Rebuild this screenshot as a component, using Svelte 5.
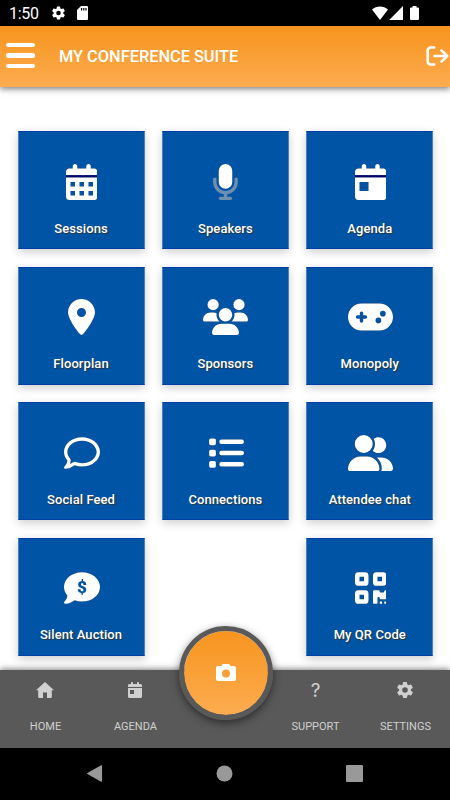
<script lang="ts">
	interface Tile {
		label: string;
		icon: string;
		width: number;
		column: number;
	}

	const calendarTop =
		'M128 0c17.7 0 32 14.3 32 32V64H288V32c0-17.7 14.3-32 32-32s32 14.3 32 32V64h48c26.5 0 48 21.5 48 48v48H0V112C0 85.5 21.5 64 48 64H96V32c0-17.7 14.3-32 32-32z';
	const calendarBody = 'M0 192H448V464c0 26.5-21.5 48-48 48H48c-26.5 0-48-21.5-48-48V192z';
	const gear =
		'M19.4 13c.04-.3.06-.65.06-1s-.02-.7-.07-1l2.1-1.65c.2-.15.24-.42.12-.64l-2-3.46c-.12-.22-.38-.3-.6-.22l-2.5 1c-.5-.4-1.07-.73-1.68-.98l-.38-2.65A.5.5 0 0 0 14 2h-4c-.24 0-.45.17-.48.4l-.38 2.65c-.6.25-1.17.6-1.68.98l-2.5-1c-.22-.08-.48 0-.6.22l-2 3.46c-.12.22-.07.5.12.64L4.6 11a8 8 0 0 0 0 2l-2.1 1.65c-.2.15-.25.42-.13.64l2 3.46c.12.22.38.3.6.22l2.5-1c.5.4 1.07.73 1.68.98l.38 2.65c.03.23.24.4.48.4h4c.24 0 .45-.17.48-.4l.38-2.65c.6-.25 1.17-.6 1.68-.98l2.5 1c.22.08.48 0 .6-.22l2-3.46c.12-.22.07-.5-.12-.64L19.4 13zM12 15.5a3.5 3.5 0 1 1 0-7 3.5 3.5 0 0 1 0 7z';

	const tiles: Tile[] = [
		{ label: 'Sessions', icon: 'days', width: 448, column: 1 },
		{ label: 'Speakers', icon: 'mic', width: 384, column: 2 },
		{ label: 'Agenda', icon: 'day', width: 448, column: 3 },
		{ label: 'Floorplan', icon: 'pin', width: 384, column: 1 },
		{ label: 'Sponsors', icon: 'users', width: 640, column: 2 },
		{ label: 'Monopoly', icon: 'gamepad', width: 640, column: 3 },
		{ label: 'Social Feed', icon: 'comment', width: 512, column: 1 },
		{ label: 'Connections', icon: 'list', width: 512, column: 2 },
		{ label: 'Attendee chat', icon: 'group', width: 640, column: 3 },
		{ label: 'Silent Auction', icon: 'auction', width: 512, column: 1 },
		{ label: 'My QR Code', icon: 'qr', width: 448, column: 3 }
	];

	const paths: Record<string, string> = {
		pin: 'M215.7 499.2C267 435 384 279.4 384 192C384 86 298 0 192 0S0 86 0 192c0 87.4 117 243 168.3 307.2c12.3 15.3 35.1 15.3 47.4 0zM192 128a64 64 0 1 1 0 128 64 64 0 1 1 0-128z',
		users:
			'M144 0a80 80 0 1 1 0 160A80 80 0 1 1 144 0zM512 0a80 80 0 1 1 0 160A80 80 0 1 1 512 0zM0 298.7C0 239.8 47.8 192 106.7 192h42.7c15.9 0 31 3.5 44.6 9.7c-1.3 7.2-1.9 14.7-1.9 22.3c0 38.2 16.8 72.5 43.3 96H21.3C9.6 320 0 310.4 0 298.7zM404.6 320c26.6-23.5 43.3-57.8 43.3-96c0-7.6-.7-15-1.9-22.3c13.6-6.3 28.7-9.7 44.6-9.7h42.7C592.2 192 640 239.8 640 298.7c0 11.8-9.6 21.3-21.3 21.3H404.6zM224 224a96 96 0 1 1 192 0 96 96 0 1 1-192 0zM128 485.3C128 411.7 187.7 352 261.3 352H378.7C452.3 352 512 411.7 512 485.3c0 14.7-11.9 26.7-26.7 26.7H154.7c-14.7 0-26.7-11.9-26.7-26.7z',
		gamepad:
			'M192 64C86 64 0 150 0 256S86 448 192 448H448c106 0 192-86 192-192s-86-192-192-192H192zM496 168a40 40 0 1 1 0 80 40 40 0 1 1 0-80zM392 304a40 40 0 1 1 80 0 40 40 0 1 1-80 0zM168 200c0-13.3 10.7-24 24-24s24 10.7 24 24v32h32c13.3 0 24 10.7 24 24s-10.7 24-24 24H216v32c0 13.3-10.7 24-24 24s-24-10.7-24-24V280H136c-13.3 0-24-10.7-24-24s10.7-24 24-24h32V200z',
		comment:
			'M123.6 391.3c12.9-9.4 29.6-11.8 44.6-6.4c26.5 9.6 56.2 15.1 87.8 15.1c124.7 0 208-80.5 208-160s-83.3-160-208-160S48 160.5 48 240c0 32 12.4 62.8 35.7 89.2c8.6 9.7 12.8 22.5 11.8 35.5c-1.4 18.1-5.7 34.7-11.3 49.4c17-7.9 31.1-16.7 39.4-22.7zM21.2 431.9c1.8-2.7 3.5-5.4 5.1-8.1c10-16.6 19.5-38.4 21.4-62.9C17.7 326.8 0 285.1 0 240C0 125.1 114.6 32 256 32s256 93.1 256 208s-114.6 208-256 208c-37.1 0-72.3-6.4-104.1-17.9c-11.9 8.7-31.3 20.6-54.3 30.6c-15.1 6.6-32.3 12.6-50.1 16.1c-10 2-20 3.3-31.6 3.3c-6.5 0-12.3-3.9-14.8-9.9c-2.5-6-1.1-12.8 3.4-17.4c4.1-4.2 11-13 16.7-20.9z',
		list: 'M40 48H88a24 24 0 0 1 24 24v48a24 24 0 0 1-24 24H40a24 24 0 0 1-24-24V72a24 24 0 0 1 24-24zM40 208H88a24 24 0 0 1 24 24v48a24 24 0 0 1-24 24H40a24 24 0 0 1-24-24V232a24 24 0 0 1 24-24zM40 368H88a24 24 0 0 1 24 24v48a24 24 0 0 1-24 24H40a24 24 0 0 1-24-24V392a24 24 0 0 1 24-24zM192 64H480a32 32 0 0 1 0 64H192a32 32 0 0 1 0-64zM192 224H480a32 32 0 0 1 0 64H192a32 32 0 0 1 0-64zM192 384H480a32 32 0 0 1 0 64H192a32 32 0 0 1 0-64z',
		group:
			'M96 128a128 128 0 1 1 256 0A128 128 0 1 1 96 128zM0 482.3C0 383.8 79.8 304 178.3 304h91.4C368.2 304 448 383.8 448 482.3c0 16.4-13.3 29.7-29.7 29.7H29.7C13.3 512 0 498.7 0 482.3zM609.3 512H471.4c5.4-9.4 8.6-20.3 8.6-32v-8c0-60.7-27.1-115.2-69.8-151.8c2.4-.1 4.7-.2 7.1-.2h61.4C567.8 320 640 392.2 640 481.3c0 17-13.8 30.7-30.7 30.7zM432 256c-31 0-59-12.6-79.3-32.9C372.4 196.5 384 163.6 384 128c0-26.8-6.6-52.1-18.3-74.3C384.3 40.1 407.2 32 432 32c61.9 0 112 50.1 112 112s-50.1 112-112 112z',
		auction:
			'M256 448c141.4 0 256-93.1 256-208S397.4 32 256 32S0 125.1 0 240c0 45.1 17.7 86.8 47.7 120.9c-1.9 24.5-11.4 46.3-21.4 62.9c-5.5 9.2-14 20.4-21.7 28.7c-4.6 4.6-5.9 11.4-3.4 17.4c2.5 6 8.3 9.9 14.8 9.9c28.7 0 57.6-8.9 81.6-19.3c22.9-10 42.4-21.9 54.3-30.6c31.8 11.5 67 17.9 104.1 17.9z',
		qr: 'M48 32H144a48 48 0 0 1 48 48v96a48 48 0 0 1-48 48H48a48 48 0 0 1-48-48V80a48 48 0 0 1 48-48zM64 96v64h64V96zM304 32h96a48 48 0 0 1 48 48v96a48 48 0 0 1-48 48h-96a48 48 0 0 1-48-48V80a48 48 0 0 1 48-48zM320 96v64h64V96zM48 288h96a48 48 0 0 1 48 48v96a48 48 0 0 1-48 48H48a48 48 0 0 1-48-48v-96a48 48 0 0 1 48-48zM64 352v64h64v-64zM256 304c0-8.8 7.2-16 16-16h64c8.8 0 16 7.2 16 16s7.2 16 16 16h32c8.8 0 16-7.2 16-16s7.2-16 16-16s16 7.2 16 16v96c0 8.8-7.2 16-16 16H368c-8.8 0-16-7.2-16-16s-7.2-16-16-16s-16 7.2-16 16v64c0 8.8-7.2 16-16 16H272c-8.8 0-16-7.2-16-16V304zM352 448h32v32h-32zM416 448h32v32h-32z'
	};

	const navItems = ['HOME', 'AGENDA', '', 'SUPPORT', 'SETTINGS'];
</script>

<div class="screen">
	<div class="status-bar">
		<span class="clock">1:50</span>
		<svg class="status-gear" viewBox="2 2 20 20"><path d={gear} /></svg>
		<svg class="sd-card" viewBox="0 0 11 14">
			<path
				fill-rule="evenodd"
				d="M4 0h6a1 1 0 0 1 1 1v12a1 1 0 0 1-1 1H1a1 1 0 0 1-1-1V4zM4 2v2.5h1.2V2zM6.2 2v2.5h1.2V2zM8.4 2v2.5h1.2V2z"
			/>
		</svg>
		<svg class="signals" viewBox="0 0 49 15">
			<path d="M0 3.6C4.5-.5 11.5-.5 16 3.6L8 14zM31 0v14H17.2z" />
			<path d="M40.5 0h4v1.5H46a1 1 0 0 1 1 1V13a1 1 0 0 1-1 1h-7a1 1 0 0 1-1-1V2.5a1 1 0 0 1 1-1h1.5z" />
		</svg>
	</div>

	<header class="app-bar">
		<button class="menu" aria-label="Menu">
			<span></span>
			<span></span>
			<span></span>
		</button>
		<h1>MY CONFERENCE SUITE</h1>
		<button class="logout" aria-label="Log out">
			<svg viewBox="0 0 23 20">
				<path d="M8.2 1.5H4.7a3 3 0 0 0-3 3v11a3 3 0 0 0 3 3h3.5M8.5 10h12.5M15.5 4.4L21.2 10l-5.7 5.6" />
			</svg>
		</button>
	</header>

	<main class="tiles">
		{#each tiles as tile}
			<button class="tile col-{tile.column}">
				<svg viewBox="0 0 {tile.width} 512" fill-rule="evenodd">
					{#if tile.icon === 'days' || tile.icon === 'day'}
						<path d={calendarTop} />
						<path class="rule" d="M0 160H448V192H0z" />
						{#if tile.icon === 'days'}
							<path
								d="{calendarBody}M64 256v64h64v-64zM192 256v64h64v-64zM320 256v64h64v-64zM64 384v64h64v-64zM192 384v64h64v-64zM320 384v64h64v-64z"
							/>
						{:else}
							<path d="{calendarBody}M64 256v128h128V256z" />
						{/if}
					{:else if tile.icon === 'mic'}
						<path
							class="faded"
							d="M64 216c0-13.3-10.7-24-24-24s-24 10.7-24 24v40c0 89.1 66.2 162.7 152 174.4V464H120c-13.3 0-24 10.7-24 24s10.7 24 24 24h144c13.3 0 24-10.7 24-24s-10.7-24-24-24H216V430.4c85.8-11.7 152-85.3 152-174.4V216c0-13.3-10.7-24-24-24s-24 10.7-24 24v40c0 70.7-57.3 128-128 128s-128-57.3-128-128V216z"
						/>
						<rect x="96" width="192" height="352" rx="96" />
					{:else}
						<path d={paths[tile.icon]} />
						{#if tile.icon === 'auction'}
							<text x="256" y="325" text-anchor="middle">$</text>
						{/if}
					{/if}
				</svg>
				<span>{tile.label}</span>
			</button>
		{/each}
	</main>

	<nav class="bottom-bar">
		{#each navItems as item}
			<div class="nav-item">
				{#if item === 'HOME'}
					<svg viewBox="0 0 18 16">
						<path d="M9 0l9 8.2h-2.2V15a1 1 0 0 1-1 1H11v-5.5H7V16H3.2a1 1 0 0 1-1-1V8.2H0z" />
					</svg>
				{:else if item === 'AGENDA'}
					<svg viewBox="0 0 448 512" fill-rule="evenodd">
						<path d={calendarTop} />
						<path d="{calendarBody}M64 256v128h128V256z" />
					</svg>
				{:else if item === 'SUPPORT'}
					<span class="question">?</span>
				{:else if item === 'SETTINGS'}
					<svg viewBox="2 2 20 20"><path d={gear} /></svg>
				{/if}
				<span class="nav-label">{item}</span>
			</div>
		{/each}
		<button class="camera" aria-label="Camera">
			<svg viewBox="0 0 20 17" fill-rule="evenodd">
				<path
					d="M7.2 0h5.6a1 1 0 0 1 .9.6L14.5 2H18a2 2 0 0 1 2 2v11a2 2 0 0 1-2 2H2a2 2 0 0 1-2-2V4a2 2 0 0 1 2-2h3.5L6.3.6A1 1 0 0 1 7.2 0zM10 5.5a4 4 0 1 0 0 8 4 4 0 1 0 0-8z"
				/>
			</svg>
		</button>
	</nav>

	<div class="system-bar">
		<svg viewBox="0 0 16 18"><path d="M15 .3a.8.8 0 0 1 1 .7v16a.8.8 0 0 1-1 .7L.5 9.6a.7.7 0 0 1 0-1.2z" /></svg>
		<svg viewBox="0 0 16 16"><circle cx="8" cy="8" r="7.5" /></svg>
		<svg viewBox="0 0 17 17"><rect width="17" height="17" rx="1" /></svg>
	</div>
</div>

<style>
	:global(body) {
		margin: 0;
		background: #fff;
	}

	.screen {
		display: flex;
		flex-direction: column;
		width: 450px;
		height: 800px;
		overflow: hidden;
		background: #fff;
		font-family: Roboto, 'Liberation Sans', sans-serif;
	}

	button {
		padding: 0;
		border: none;
		background: none;
		font-family: inherit;
		color: inherit;
	}

	svg {
		display: block;
		fill: currentColor;
	}

	.status-bar {
		display: flex;
		align-items: center;
		flex: none;
		box-sizing: border-box;
		height: 26px;
		padding: 0 29px 0 9px;
		background: #000;
		color: #fff;
	}

	.clock {
		box-sizing: border-box;
		width: 43px;
		height: 26px;
		padding-top: 2px;
		font-size: 16px;
		line-height: 24px;
		letter-spacing: -0.3px;
	}

	.status-gear {
		width: 13px;
		height: 14px;
	}

	.sd-card {
		width: 11px;
		height: 14px;
		margin-left: 12px;
	}

	.signals {
		width: 49px;
		height: 15px;
		margin-left: auto;
	}

	.app-bar {
		display: flex;
		align-items: center;
		flex: none;
		box-sizing: border-box;
		height: 61.3px;
		padding: 0 1px 0 6px;
		background: linear-gradient(#f7941e, #fcac50);
		box-shadow: 0 2px 6px rgba(0, 0, 0, 0.5);
		color: #fff;
		z-index: 1;
	}

	.menu {
		display: flex;
		flex-direction: column;
		gap: 6px;
		width: 29px;
		margin-bottom: 2px;
	}

	.menu span {
		height: 4.4px;
		border-radius: 2px;
		background: #fff;
	}

	h1 {
		margin: 0 0 0 24px;
		font-size: 16.35px;
		font-weight: 500;
	}

	.logout {
		margin: 0 0 1px auto;
	}

	.logout svg {
		width: 23px;
		height: 20px;
		fill: none;
		stroke: #fff;
		stroke-width: 2.6;
		stroke-linecap: round;
		stroke-linejoin: round;
	}

	.tiles {
		flex: 1;
		min-height: 0;
		display: grid;
		grid-template-columns: repeat(3, 127px);
		grid-auto-rows: 118px;
		gap: 17.6px 17.4px;
		padding: 44px 0 0 17.5px;
		box-sizing: border-box;
	}

	.tile {
		display: flex;
		flex-direction: column;
		align-items: center;
		box-sizing: border-box;
		padding-top: 31.4px;
		border: 1px solid #0040a6;
		border-left-color: #547bc2;
		border-right-color: #547bc2;
		background: #0054a6;
		box-shadow: 0 3px 9px rgba(0, 0, 0, 0.2);
		color: #fff;
	}

	.col-1 {
		grid-column: 1;
	}

	.col-2 {
		grid-column: 2;
	}

	.col-3 {
		grid-column: 3;
	}

	.tile svg {
		height: 36px;
		margin-left: 1px;
		filter: drop-shadow(0.5px 0.7px 0.4px rgba(40, 40, 40, 0.8));
	}

	.tile span {
		margin-top: 21px;
		font-size: 13px;
		font-weight: 500;
		line-height: 16px;
		letter-spacing: 0.08px;
		text-shadow: 1px 1px 1px #333;
	}

	.tile text {
		font-size: 245px;
		font-weight: 900;
		fill: #0054a6;
	}

	.rule {
		fill: #000070;
	}

	.faded {
		opacity: 0.4;
	}

	.bottom-bar {
		position: relative;
		display: grid;
		grid-template-columns: repeat(5, 1fr);
		flex: none;
		height: 77.5px;
		background: #595959;
		box-shadow: 0 -1px 6px rgba(0, 0, 0, 0.5);
		color: #d0d0d0;
	}

	.nav-item {
		display: flex;
		flex-direction: column;
		align-items: center;
		padding-top: 12px;
	}

	.nav-item svg {
		height: 16px;
	}

	.question {
		height: 16px;
		margin-left: 1px;
		font-family: Inter, Roboto, sans-serif;
		font-size: 19px;
		line-height: 17px;
	}

	.nav-label {
		margin: 22px 0 0 1px;
		font-size: 11px;
		line-height: 14px;
	}

	.camera {
		position: absolute;
		left: 178.5px;
		top: -44px;
		display: flex;
		align-items: center;
		justify-content: center;
		box-sizing: border-box;
		width: 94px;
		height: 94px;
		border: 5px solid #595959;
		border-radius: 50%;
		background: linear-gradient(#f7941e, #fcac50) padding-box;
		box-shadow: 0 3px 9px rgba(0, 0, 0, 0.5);
		color: #fff;
	}

	.camera svg {
		width: 20px;
		height: 17px;
		margin-bottom: 1px;
	}

	.system-bar {
		display: grid;
		grid-template-columns: 17px 17px 17px;
		align-items: center;
		justify-content: space-between;
		flex: none;
		box-sizing: border-box;
		height: 52.5px;
		padding: 0 87px 0 85.5px;
		background: #000;
		color: #999;
		z-index: 1;
	}

	.system-bar svg {
		width: 17px;
		height: 17px;
	}
</style>
